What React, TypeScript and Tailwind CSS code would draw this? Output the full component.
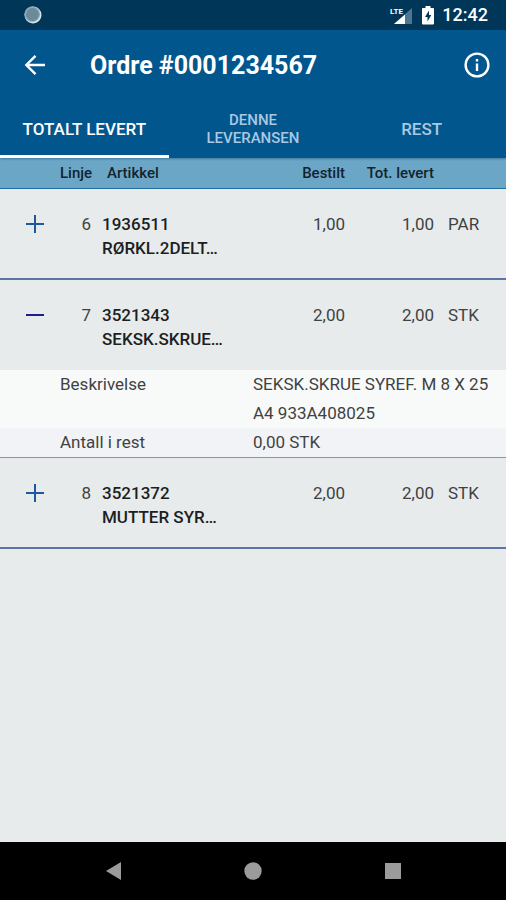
import { Fragment, useState } from "react";

type Detail = { label: string; value: string };
type OrderLine = {
  line: number;
  article: string;
  name: string;
  ordered: string;
  delivered: string;
  unit: string;
  details: Detail[];
};

const orderLines: OrderLine[] = [
  { line: 6, article: "1936511", name: "RØRKL.2DELT…", ordered: "1,00", delivered: "1,00", unit: "PAR", details: [] },
  {
    line: 7,
    article: "3521343",
    name: "SEKSK.SKRUE…",
    ordered: "2,00",
    delivered: "2,00",
    unit: "STK",
    details: [
      { label: "Beskrivelse", value: "SEKSK.SKRUE SYREF. M 8 X 25 A4 933A408025" },
      { label: "Antall i rest", value: "0,00 STK" },
    ],
  },
  { line: 8, article: "3521372", name: "MUTTER SYR…", ordered: "2,00", delivered: "2,00", unit: "STK", details: [] },
];

const tabs = ["TOTALT LEVERT", "DENNE LEVERANSEN", "REST"];

function StatusBar() {
  return (
    <div className="flex h-[30px] items-center bg-[#003759] pr-[18px] pl-6 text-white">
      <svg className="size-[18px]" viewBox="0 0 18 18" aria-hidden="true">
        <circle cx="9" cy="9" r="8.5" fill="#dbe6ec" />
        <circle cx="8.3" cy="8.2" r="7.8" fill="#8fa8b6" />
        <circle cx="8.5" cy="8.5" r="6.4" fill="#6b8b9d" />
      </svg>
      <div className="ml-auto flex items-center">
        <svg className="mr-[9px] h-5 w-6" viewBox="0 0 24 20" aria-hidden="true">
          <path d="M23 3v16H5z" fill="#4f7690" />
          <path d="M16 9.500V19H5z" fill="#fff" />
          <text x="1" y="9" fontSize="8" fontWeight="700" fontFamily="Roboto, sans-serif" fill="#fff">
            LTE
          </text>
        </svg>
        <svg className="mr-2 h-5 w-3" viewBox="0 0 12 20" aria-hidden="true">
          <path d="M3.500 1h5v2H11q1 0 1 1v14.500q0 1-1 1H1q-1 0-1-1V4q0-1 1-1h2.500z" fill="#fff" />
          <path d="M7 5.500 3 12h2.500v4.500L9.300 10H7z" fill="#003759" />
        </svg>
        <span className="text-[18px] leading-[30px] font-medium">12:42</span>
      </div>
    </div>
  );
}

function AppBar() {
  return (
    <header className="flex h-[70px] items-center pr-4 pl-6">
      <button type="button" aria-label="Tilbake" className="mr-11">
        <svg className="size-[22px]" viewBox="0 0 22 22" fill="none" stroke="#fff" strokeWidth="2.4" aria-hidden="true">
          <path d="M21 11H3M11.500 1.800 2.300 11l9.200 9.200" />
        </svg>
      </button>
      <h1 className="flex-1 pt-px text-[25px] leading-[33px] font-bold text-white">Ordre #0001234567</h1>
      <button type="button" aria-label="Informasjon">
        <svg className="size-[26px]" viewBox="0 0 26 26" fill="none" stroke="#fff" strokeWidth="2.4" aria-hidden="true">
          <circle cx="13" cy="13" r="11.400" />
          <path d="M13 11.500V19M13 7v2.600" />
        </svg>
      </button>
    </header>
  );
}

function ExpandIcon({ open }: { open: boolean }) {
  return (
    <svg
      className="size-[18px]"
      viewBox="0 0 18 18"
      fill="none"
      stroke={open ? "#1d1f8c" : "#1f56a0"}
      strokeWidth="2"
      aria-hidden="true"
    >
      <path d={open ? "M0 9h18" : "M0 9h18M9 0v18"} />
    </svg>
  );
}

export default function App() {
  const [active, setActive] = useState(0);
  const [openLine, setOpenLine] = useState<number | null>(7);

  return (
    <div className="flex min-h-screen flex-col bg-[#e7ebec] font-[Roboto,'Noto_Sans',sans-serif] text-[17px] leading-6 text-[#3f4243]">
      <StatusBar />
      <div className="relative bg-[#01568e] shadow-[0_1px_2px_rgba(0,50,90,0.4)]">
        <AppBar />
        <div role="tablist" className="grid h-[58px] grid-cols-3">
          {tabs.map((tab, i) => (
            <button
              key={tab}
              type="button"
              role="tab"
              aria-selected={i === active}
              onClick={() => setActive(i)}
              className={`border-b-[3px] px-3 pt-[2px] font-medium ${
                i === active ? "border-white text-white" : "border-transparent text-[#a9c8e2]"
              } ${i === 1 ? "text-[15px] leading-[18px]" : "text-[17px] leading-6"}`}
            >
              {tab}
            </button>
          ))}
        </div>
      </div>

      <main className="flex-1">
        <table className="w-full table-fixed border-separate border-spacing-0">
          <colgroup>
            <col className="w-[60px]" />
            <col className="w-[31px]" />
            <col />
            <col className="w-[80px]" />
            <col className="w-[89px]" />
            <col className="w-[72px]" />
          </colgroup>
          <thead className="text-[15px] leading-[30px] text-[#12242e]">
            <tr className="bg-[#6ba6c6] *:border-b *:border-[#1f6ca0] *:font-medium">
              <td />
              <th scope="col" className="text-right">Linje</th>
              <th scope="col" className="pl-4 text-left">Artikkel</th>
              <th scope="col" className="text-right">Bestilt</th>
              <th scope="col" className="text-right">Tot. levert</th>
              <td />
            </tr>
          </thead>
          <tbody>
            {orderLines.map((row) => {
              const open = row.line === openLine && row.details.length > 0;
              return (
                <Fragment key={row.line}>
                  <tr
                    className={`align-top *:pt-[23px] ${open ? "h-[90px]" : "h-[91px] *:border-b-2 *:border-[#5d74a4]"}`}
                  >
                    <td className="pl-[26px]">
                      <button
                        type="button"
                        aria-label={`Vis linje ${row.line}`}
                        aria-expanded={open}
                        onClick={() => setOpenLine(open ? null : row.line)}
                        className="flex h-6 items-center"
                      >
                        <ExpandIcon open={open} />
                      </button>
                    </td>
                    <td className="text-right">{row.line}</td>
                    <td className="pl-[11px] font-medium text-[#1c1e1f]">
                      <div>{row.article}</div>
                      <div>{row.name}</div>
                    </td>
                    <td className="text-right">{row.ordered}</td>
                    <td className="text-right">{row.delivered}</td>
                    <td className="pl-[14px]">{row.unit}</td>
                  </tr>
                  {open && (
                    <tr>
                      <td colSpan={6} className="border-b border-[#8c93bb]">
                        <dl>
                          {row.details.map((detail, i) => (
                            <div
                              key={detail.label}
                              className={`grid grid-cols-2 leading-[29px] ${i % 2 ? "bg-[#f2f3f6]" : "bg-[#f8faf9]"}`}
                            >
                              <dt className="pl-[60px]">{detail.label}</dt>
                              <dd className="pr-2">{detail.value}</dd>
                            </div>
                          ))}
                        </dl>
                      </td>
                    </tr>
                  )}
                </Fragment>
              );
            })}
          </tbody>
        </table>
      </main>

      <nav aria-label="System" className="flex h-[58px] items-center justify-center gap-[122px] bg-black text-[#9b9b9b]">
        <button type="button" aria-label="Tilbake">
          <svg className="size-[18px]" viewBox="0 0 18 18" fill="currentColor" aria-hidden="true">
            <path d="M17 0v18L2 9z" />
          </svg>
        </button>
        <button type="button" aria-label="Hjem">
          <svg className="size-[18px]" viewBox="0 0 18 18" fill="currentColor" aria-hidden="true">
            <circle cx="9" cy="9" r="8.700" />
          </svg>
        </button>
        <button type="button" aria-label="Oversikt">
          <svg className="size-[18px]" viewBox="0 0 18 18" fill="currentColor" aria-hidden="true">
            <path d="M1 1h16v16H1z" />
          </svg>
        </button>
      </nav>
    </div>
  );
}
